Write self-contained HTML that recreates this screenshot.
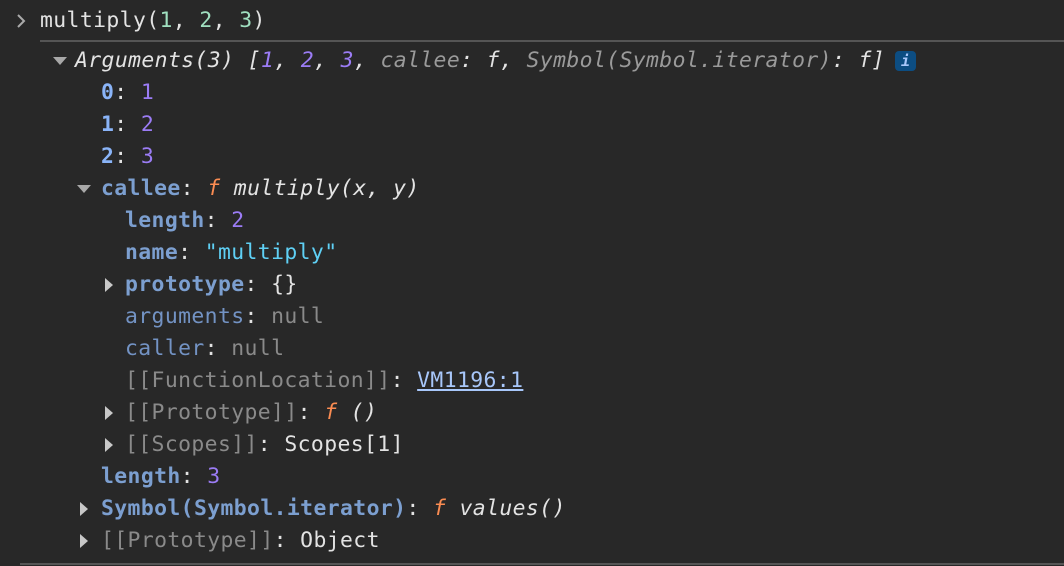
<!DOCTYPE html>
<html><head><style>
html,body{margin:0;padding:0;background:#282828;width:1064px;height:566px;overflow:hidden}
.l{position:absolute;white-space:pre;font-family:"DejaVu Sans Mono","Liberation Mono",monospace;font-size:21.4px;line-height:32px;color:#e3e3e3;letter-spacing:0.4px}
.k{color:#7c9fd0;font-weight:bold}
.kn{color:#7393c4}
.i{font-style:italic}
.g{color:#9a9a9a}
.gr{color:#8a8a8a}
.n{color:#9b7cf5}
.ng{color:#a0e0c0}
.s{color:#5fd0f5}
.f{color:#fb8c52;font-style:italic}
.ix{color:#8ab4f8;font-weight:bold}
.lk{color:#a8c7fa;text-decoration:underline}
.t{position:absolute;width:0;height:0}
.td{border-left:7px solid transparent;border-right:7px solid transparent;border-top:8px solid #a8a8a8}
.tr{border-top:7px solid transparent;border-bottom:7px solid transparent;border-left:8px solid #c8c8c8}
.hr{position:absolute;height:2px;background:#555}
.info{position:absolute;left:895px;top:51px;width:21px;height:20px;background:#0c4d82;border-radius:4px;color:#a8c7fa;font:italic bold 15px "DejaVu Sans Mono",monospace;text-align:center;line-height:20px}
</style></head><body>
<svg style="position:absolute;left:15px;top:13px" width="12" height="16"><path d="M3 2 L9 8 L3 14" stroke="#aaa" stroke-width="2" fill="none"/></svg>
<div class="l" style="left:40px;top:5px">multiply(<span class="ng">1</span>, <span class="ng">2</span>, <span class="ng">3</span>)</div>
<div class="hr" style="left:40px;top:40px;width:1024px"></div>
<div class="t td" style="left:53px;top:57px"></div>
<div class="l i" style="left:75px;top:45px;letter-spacing:0.4px">Arguments(3) [<span class="n">1</span>, <span class="n">2</span>, <span class="n">3</span>, <span class="g">callee</span>: f, <span class="g">Symbol(Symbol.iterator)</span>: f]</div>
<div class="info">i</div>
<div class="l" style="left:101px;top:77px"><span class="ix">0</span>: <span class="n">1</span></div>
<div class="l" style="left:101px;top:109px"><span class="ix">1</span>: <span class="n">2</span></div>
<div class="l" style="left:101px;top:141px"><span class="ix">2</span>: <span class="n">3</span></div>
<div class="t td" style="left:77px;top:185px"></div>
<div class="l" style="left:101px;top:173px"><span class="k">callee</span>: <span class="f">f</span> <span class="i">multiply(x, y)</span></div>
<div class="l" style="left:125px;top:205px"><span class="k">length</span>: <span class="n">2</span></div>
<div class="l" style="left:125px;top:237px"><span class="k">name</span>: <span class="s">"multiply"</span></div>
<div class="t tr" style="left:105px;top:278px"></div>
<div class="l" style="left:125px;top:269px"><span class="k">prototype</span>: {}</div>
<div class="l" style="left:125px;top:301px"><span class="kn">arguments</span>: <span class="gr">null</span></div>
<div class="l" style="left:125px;top:333px"><span class="kn">caller</span>: <span class="gr">null</span></div>
<div class="l" style="left:125px;top:365px"><span class="gr">[[FunctionLocation]]</span>: <span class="lk">VM1196:1</span></div>
<div class="t tr" style="left:105px;top:406px"></div>
<div class="l" style="left:125px;top:397px"><span class="gr">[[Prototype]]</span>: <span class="f">f</span> <span class="i">()</span></div>
<div class="t tr" style="left:105px;top:438px"></div>
<div class="l" style="left:125px;top:429px"><span class="gr">[[Scopes]]</span>: Scopes[1]</div>
<div class="l" style="left:101px;top:461px"><span class="k">length</span>: <span class="n">3</span></div>
<div class="t tr" style="left:80px;top:502px"></div>
<div class="l" style="left:101px;top:493px"><span class="k">Symbol(Symbol.iterator)</span>: <span class="f">f</span> <span class="i">values()</span></div>
<div class="t tr" style="left:80px;top:534px"></div>
<div class="l" style="left:101px;top:525px"><span class="gr">[[Prototype]]</span>: Object</div>
<div class="hr" style="left:20px;top:563px;width:1044px"></div>
</body></html>
